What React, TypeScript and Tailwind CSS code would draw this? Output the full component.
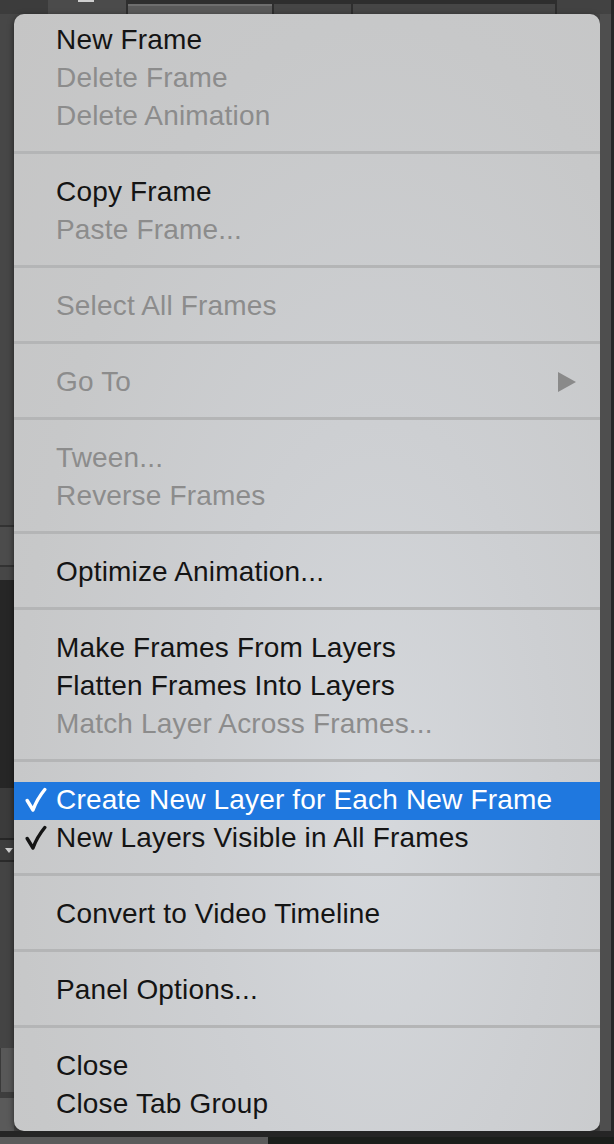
import React from "react";

type Item =
  | { kind: "item"; label: string; disabled?: boolean; checked?: boolean; highlighted?: boolean; submenu?: boolean }
  | { kind: "sep" };

const items: Item[] = [
  { kind: "item", label: "New Frame" },
  { kind: "item", label: "Delete Frame", disabled: true },
  { kind: "item", label: "Delete Animation", disabled: true },
  { kind: "sep" },
  { kind: "item", label: "Copy Frame" },
  { kind: "item", label: "Paste Frame...", disabled: true },
  { kind: "sep" },
  { kind: "item", label: "Select All Frames", disabled: true },
  { kind: "sep" },
  { kind: "item", label: "Go To", disabled: true, submenu: true },
  { kind: "sep" },
  { kind: "item", label: "Tween...", disabled: true },
  { kind: "item", label: "Reverse Frames", disabled: true },
  { kind: "sep" },
  { kind: "item", label: "Optimize Animation..." },
  { kind: "sep" },
  { kind: "item", label: "Make Frames From Layers" },
  { kind: "item", label: "Flatten Frames Into Layers" },
  { kind: "item", label: "Match Layer Across Frames...", disabled: true },
  { kind: "sep" },
  { kind: "item", label: "Create New Layer for Each New Frame", checked: true, highlighted: true },
  { kind: "item", label: "New Layers Visible in All Frames", checked: true },
  { kind: "sep" },
  { kind: "item", label: "Convert to Video Timeline" },
  { kind: "sep" },
  { kind: "item", label: "Panel Options..." },
  { kind: "sep" },
  { kind: "item", label: "Close" },
  { kind: "item", label: "Close Tab Group" },
];

function Check({ white }: { white?: boolean }) {
  return (
    <svg width="22" height="26" viewBox="0 0 22 26" className="block">
      <path
        d="M2.2 13.5 L8 23 Q12 12 19.8 2.5"
        fill="none"
        stroke={white ? "#ffffff" : "#141414"}
        strokeWidth="3.4"
        strokeLinecap="round"
        strokeLinejoin="round"
      />
    </svg>
  );
}

function MenuRow({ item }: { item: Item }) {
  if (item.kind === "sep") {
    return (
      <div className="h-[38px] flex flex-col">
        <div className="h-[15px]" />
        <div className="h-[3px] bg-[#b4b5b6]" />
      </div>
    );
  }
  const color = item.highlighted ? "text-white" : item.disabled ? "text-[#8c8c8c]" : "text-[#141414]";
  return (
    <div className={`h-[38px] flex items-center ${item.highlighted ? "bg-[#1f78df]" : ""}`}>
      <div className="w-[43px] flex justify-end pr-[10px] pb-[2px]">
        {item.checked ? <Check white={item.highlighted} /> : null}
      </div>
      <div className={`flex-1 -ml-[1px] text-[28px] leading-[34px] pb-[3px] tracking-[0.17px] whitespace-nowrap ${color}`}>{item.label}</div>
      {item.submenu ? (
        <div className="w-[42px] flex pb-[2px]">
          <div className="w-0 h-0 border-y-[10px] border-y-transparent border-l-[18px] border-l-[#8a8a8a]" />
        </div>
      ) : null}
    </div>
  );
}

export default function App() {
  return (
    <div
      className="w-[614px] h-[1144px] bg-[#474747] flex flex-col overflow-hidden"
      style={{ fontFamily: '"Liberation Sans", Arial, sans-serif' }}
    >
      {/* top strip */}
      <div className="h-[14px] flex">
        <div className="w-[48px] bg-[#3c3c3c]" />
        <div className="w-[30px] bg-[#4b4b4b]" />
        <div className="w-[16px] bg-[#4b4b4b] flex flex-col">
          <div className="h-[2px] bg-[#cfcfcf]" />
        </div>
        <div className="w-[32px] bg-[#4b4b4b]" />
        <div className="w-[431px] bg-[#2e2e2e] flex gap-[2px] pt-[4px] px-[2px]">
          <div className="w-[144px] bg-[#5a5a5a] border-t-2 border-[#6e6e6e]" />
          <div className="w-[77px] bg-[#464646]" />
          <div className="flex-1 bg-[#464646]" />
        </div>
        <div className="flex-1 bg-[#424242]" />
        <div className="w-[3px] bg-[#262626]" />
      </div>

      {/* middle */}
      <div className="flex flex-1">
        <div className="w-[14px] flex flex-col bg-[#474747]">
          <div className="h-[511px]" />
          <div className="h-[2px] bg-[#333333]" />
          <div className="h-[38px] bg-[#4c4c4c]" />
          <div className="h-[2px] bg-[#333333]" />
          <div className="h-[13px] bg-[#474747]" />
          <div className="h-[208px] bg-[#262626]" />
          <div className="h-[50px] bg-[#3b3b3b]" />
          <div className="h-[2px] bg-[#262626]" />
          <div className="h-[20px] bg-[#3e3e3e] flex items-center pl-[5px]">
            <div className="w-0 h-0 border-x-[4px] border-x-transparent border-t-[5px] border-t-[#d0d0d0]" />
          </div>
          <div className="h-[2px] bg-[#2a2a2a]" />
          <div className="h-[186px] bg-[#444444]" />
          <div className="h-[44px] bg-[#585858] border-l border-[#3a3a3a]" />
          <div className="h-[6px] bg-[#3e3e3e]" />
          <div className="flex-1 bg-[#5a5a5a]" />
        </div>

        {/* menu */}
        <div className="w-[586px] rounded-[10px] overflow-hidden shadow-[0_2px_6px_rgba(0,0,0,0.55)] bg-[radial-gradient(ellipse_at_62%_72%,#d5d8dc_0%,#cdcfd2_35%,#c7c8c9_70%,#c5c5c5_100%)] pt-[8px] pb-[7px] flex flex-col">
          {items.map((it, i) => (
            <MenuRow key={i} item={it} />
          ))}
        </div>

        <div className="w-[14px] flex">
          <div className="w-[11px] bg-[#4e4e4e]" />
          <div className="flex-1 bg-[#272727]" />
        </div>
      </div>

      {/* bottom strip */}
      <div className="h-[13px] flex flex-col">
        <div className="h-[6px] bg-[#252525]" />
        <div className="flex-1 flex">
          <div className="w-[268px] bg-[#5b5b5b]" />
          <div className="flex-1 bg-[#1b1e1b]" />
        </div>
      </div>
    </div>
  );
}
